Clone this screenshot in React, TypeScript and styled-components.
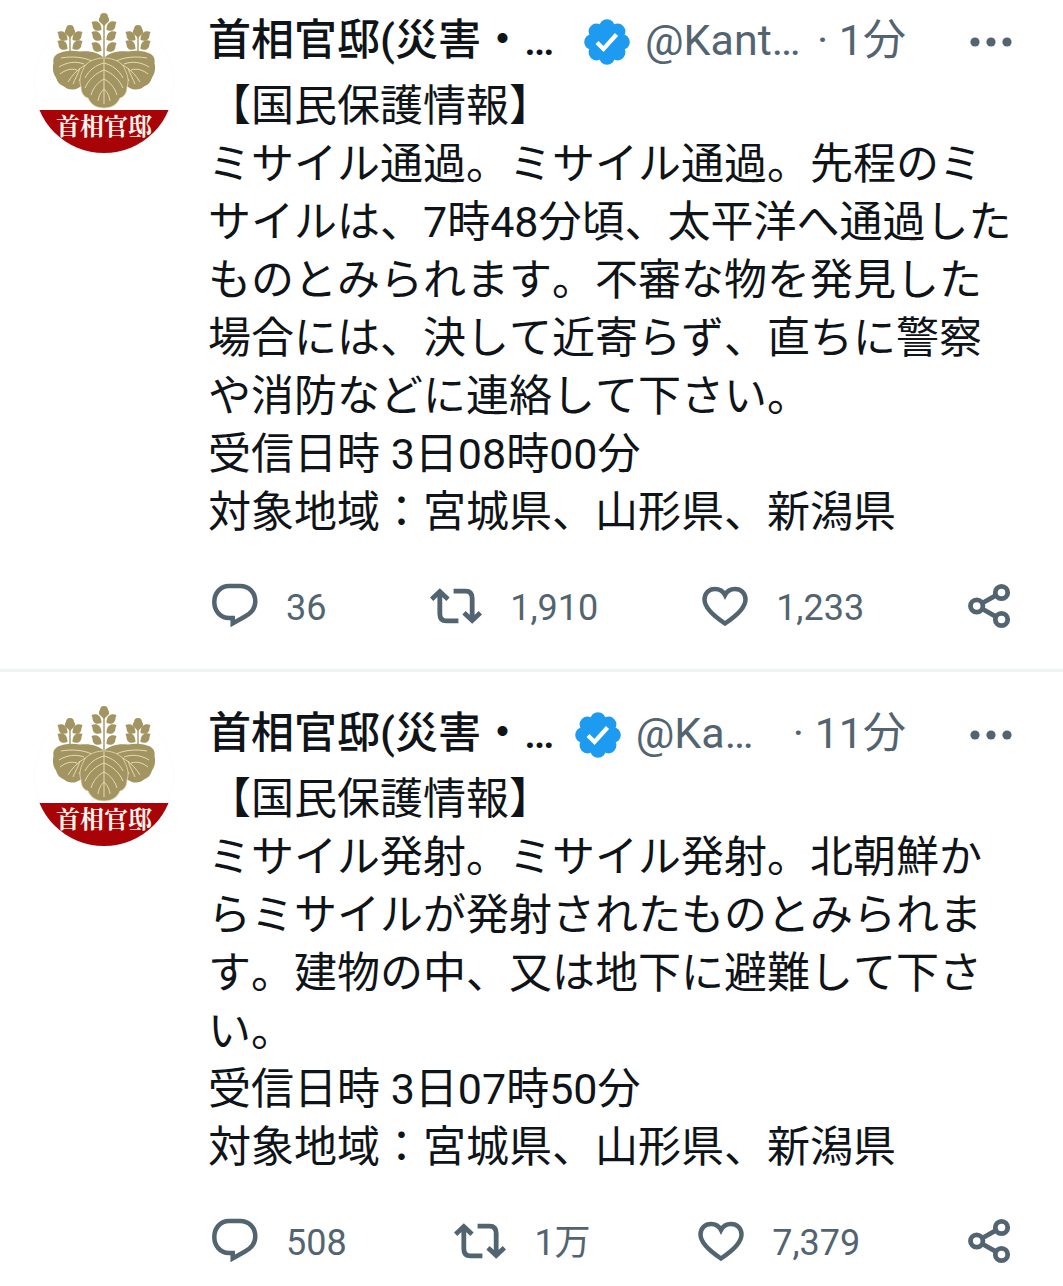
import React from "react";
import styled, { createGlobalStyle } from "styled-components";

const ink = "#0f1419";
const slate = "#536471";

const GlobalStyle = createGlobalStyle`
  * { box-sizing: border-box; }
  body {
    margin: 0;
    background: #fff;
    color: ${ink};
    font-family: Roboto, "Noto Sans CJK JP", sans-serif;
    font-size: 43px;
    line-height: 58px;
  }
`;

const Feed = styled.main`
  display: flex;
  flex-direction: column;
  overflow: hidden;
`;

const Post = styled.article`
  display: flex;
  gap: 34px;
  padding: 34px 51px 40px 34px;
  border-bottom: 3px solid #eff3f4;

  &:first-child { padding-top: 13px; }
  &:last-child { padding-bottom: 22px; border-bottom: 0; }
`;

const AvatarLink = styled.a`
  flex: none;
  display: flex;
  flex-direction: column;
  width: 140px;
  height: 140px;
  border-radius: 50%;
  overflow: hidden;
  background: #fff;
  text-decoration: none;
  box-shadow: inset 0 0 0 1px #fcfcfc;
`;

const AvatarBand = styled.span`
  flex: 1;
  background: #a80408;
  color: #fff4ee;
  font-family: "Noto Serif CJK JP", "Noto Sans CJK JP", serif;
  font-size: 24px;
  font-weight: 700;
  line-height: 30px;
  text-align: center;
`;

const Content = styled.div`
  flex: 1;
  min-width: 0;
`;

const Header = styled.header`
  display: flex;
  align-items: center;
  height: 58px;
  margin-bottom: 6px;
  white-space: nowrap;
`;

const Name = styled.h2`
  flex: 1;
  margin: 0;
  padding-bottom: 4px;
  font-size: 43px;
  font-weight: 500;
`;

const Handle = styled.span<{ $width: number }>`
  width: ${(p) => p.$width}px;
  margin-left: 15px;
  padding-bottom: 4px;
  color: ${slate};
`;

const Time = styled.time`
  padding-bottom: 4px;
  color: ${slate};
`;

const IconButton = styled.button`
  display: flex;
  align-items: center;
  gap: 28px;
  padding: 0;
  border: 0;
  background: none;
  color: ${slate};
  font: inherit;
  cursor: pointer;

  svg { flex: none; display: block; }
`;

const MoreButton = styled(IconButton)`
  margin-left: 64px;
`;

const Body = styled.p`
  margin: 0;
  font-kerning: none;
  white-space: pre-line;
`;

const Actions = styled.footer`
  display: flex;
  align-items: center;
  justify-content: space-between;
  height: 46px;
  margin-top: 42px;
  padding-left: 4px;
  font-size: 36px;
  line-height: 42px;
`;

const Count = styled.span`
  padding-top: 4px;
`;

const gold = "#a29562";
const cream = "#e4dcb4";

const Spray = ({ x, top, rows }: { x: number; top: number; rows: number[] }) => (
  <g fill={gold}>
    <path d={`M${x} ${top}V46`} stroke={gold} strokeWidth="1.4" />
    <path
      d={`M${x} ${top - 6}c3 0 4 2 4 4 2 2 1 5-1 6l-3 3-3-3c-2-1-3-4-1-6 0-2 1-4 4-4z`}
    />
    {rows.map((y) => (
      <g key={y}>
        <path
          d={`M${x - 2.5} ${y + 4}c-5 2-9 0-9-5l-1-3c5-2 10 0 10 8z`}
        />
        <path
          d={`M${x + 2.5} ${y + 4}c5 2 9 0 9-5l1-3c-5-2-10 0-10 8z`}
        />
      </g>
    ))}
  </g>
);

const SideLeaf = () => (
  <g>
    <path
      d="M70 45C65 40 57 37.5 46 38.500C38 37 31 38 27 39.500C21 41 18.500 45 19.500 50C18.500 54 18.500 60 22 64.500C23 69 26 72 30 73.500C34 77.500 41 77.500 46 74L70 60Z"
      fill={gold}
    />
    <path
      d="M69 46C54 48 41 57 34 69M58 48C49 44 38 43 27 45M50 51C42 48 33 49 25 54M43 57C37 55 31 57 26 61M55 50C52 57 48 62 45 68M46 55C44 61 41 66 39 71"
      fill="none"
      stroke={cream}
      strokeWidth="1"
    />
  </g>
);

const Crest = () => (
  <svg width="140" height="97" viewBox="0 0 140 97" aria-hidden="true">
    <Spray x={70} top={6} rows={[13, 23, 34]} />
    <Spray x={36} top={18} rows={[23, 32]} />
    <Spray x={104} top={18} rows={[23, 32]} />
    <SideLeaf />
    <g transform="translate(140 0) scale(-1 1)">
      <SideLeaf />
    </g>
    <path
      d="M70 45C61 45 51 49 49 57C46 62 45 69 47 74C47 80 50 84 54 85C57 92 63 95 70 95C77 95 83 92 86 85C90 84 93 80 93 74C95 69 94 62 91 57C89 49 79 45 70 45Z"
      fill={gold}
      stroke={cream}
      strokeWidth="0.8"
    />
    <path
      d="M70 46V91M70 50C62 52 55 57 51 65M70 50C78 52 85 57 89 65M70 57C62 60 55 66 51 75M70 57C78 60 85 66 89 75M70 66C64 69 59 75 57 82M70 66C76 69 81 75 83 82M70 76C67 79 65 82 64 88M70 76C73 79 75 82 76 88"
      fill="none"
      stroke={cream}
      strokeWidth="1"
    />
  </svg>
);

const petals = Array.from({ length: 8 }, (_, i) => (i * Math.PI) / 4);

const Verified = () => (
  <svg width="46" height="46" viewBox="0 0 46 46" role="img" aria-label="認証済み">
    <g fill="#1d9bf0">
      <circle cx="23" cy="23" r="18" />
      {petals.map((a) => (
        <circle key={a} cx={23 + 15 * Math.cos(a)} cy={23 + 15 * Math.sin(a)} r="7.8" />
      ))}
    </g>
    <path d="M13 23.5l6.500 6.500L32.500 15.500" fill="none" stroke="#fff" strokeWidth="4.200" />
  </svg>
);

const MoreIcon = () => (
  <svg width="42" height="12" viewBox="0 0 42 12" fill="currentColor">
    <circle cx="5" cy="6" r="4.6" />
    <circle cx="21" cy="6" r="4.6" />
    <circle cx="37" cy="6" r="4.6" />
  </svg>
);

const line = { fill: "none", stroke: "currentColor", strokeWidth: 4.5 };

const ReplyIcon = () => (
  <svg width="46" height="46" viewBox="0 0 46 46" {...line}>
    <path d="M28 3C37 3 43.300 9.500 43.300 18.500C43.300 25 39.500 30 33 33.500L20.700 40.500V35H17C8.500 35 2.300 28 2.300 19C2.300 10 8.500 3 17 3Z" />
  </svg>
);

const RepostIcon = () => (
  <svg width="52" height="38" viewBox="0 0 54 38" {...line} strokeWidth={5}>
    <path d="M1.700 12L10.200 4L18.700 12M10.200 4V27C10.200 32 12.500 34.500 17 34.500H29.500M24.500 3.500H37C41.500 3.500 43.800 6 43.800 11V34M35.300 26L43.800 34L52.300 26" />
  </svg>
);

const LikeIcon = () => (
  <svg width="46" height="42" viewBox="0 0 46 42" {...line}>
    <path d="M23 38.500C14 32.500 2.500 23.500 2.500 14.500C2.500 8 7 4 13 4C17.500 4 21 6 23 10C25 6 28.500 4 33 4C39 4 43.500 8 43.500 14.500C43.500 23.500 32 32.500 23 38.500Z" />
  </svg>
);

const ShareIcon = () => (
  <svg width="44" height="46" viewBox="0 0 44 46" {...line} strokeWidth={4.8}>
    <circle cx="8.700" cy="23" r="6.200" />
    <circle cx="33.500" cy="9.500" r="6.200" />
    <circle cx="33.500" cy="36.500" r="6.200" />
    <path d="M14.500 20L27.500 12.700M14.500 26L27.500 33.300" />
  </svg>
);

interface PostData {
  handle: string;
  handleWidth: number;
  time: string;
  body: string;
  replies: string;
  reposts: string;
  likes: string;
}

const posts: PostData[] = [
  {
    handle: "@Kant…",
    handleWidth: 172,
    time: "1分",
    body:
      "【国民保護情報】\nミサイル通過。ミサイル通過。先程のミサイルは、7時48分頃、太平洋へ通過したものとみられます。不審な物を発見した場合には、決して近寄らず、直ちに警察や消防などに連絡して下さい。\n受信日時 3日08時00分\n対象地域：宮城県、山形県、新潟県",
    replies: "36",
    reposts: "1,910",
    likes: "1,233",
  },
  {
    handle: "@Ka…",
    handleWidth: 157,
    time: "11分",
    body:
      "【国民保護情報】\nミサイル発射。ミサイル発射。北朝鮮からミサイルが発射されたものとみられます。建物の中、又は地下に避難して下さい。\n受信日時 3日07時50分\n対象地域：宮城県、山形県、新潟県",
    replies: "508",
    reposts: "1万",
    likes: "7,379",
  },
];

export default function App() {
  return (
    <>
      <GlobalStyle />
      <Feed lang="ja">
        {posts.map((post) => (
          <Post key={post.time}>
            <AvatarLink href="#profile">
              <Crest />
              <AvatarBand>首相官邸</AvatarBand>
            </AvatarLink>
            <Content>
              <Header>
                <Name>首相官邸(災害・…</Name>
                <Verified />
                <Handle $width={post.handleWidth}>{post.handle}</Handle>
                <Time>· {post.time}</Time>
                <MoreButton aria-label="もっと見る">
                  <MoreIcon />
                </MoreButton>
              </Header>
              <Body>{post.body}</Body>
              <Actions>
                <IconButton aria-label={`返信 ${post.replies}`}>
                  <ReplyIcon />
                  <Count>{post.replies}</Count>
                </IconButton>
                <IconButton aria-label={`リツイート ${post.reposts}`}>
                  <RepostIcon />
                  <Count>{post.reposts}</Count>
                </IconButton>
                <IconButton aria-label={`いいね ${post.likes}`}>
                  <LikeIcon />
                  <Count>{post.likes}</Count>
                </IconButton>
                <IconButton aria-label="共有">
                  <ShareIcon />
                </IconButton>
              </Actions>
            </Content>
          </Post>
        ))}
      </Feed>
    </>
  );
}
